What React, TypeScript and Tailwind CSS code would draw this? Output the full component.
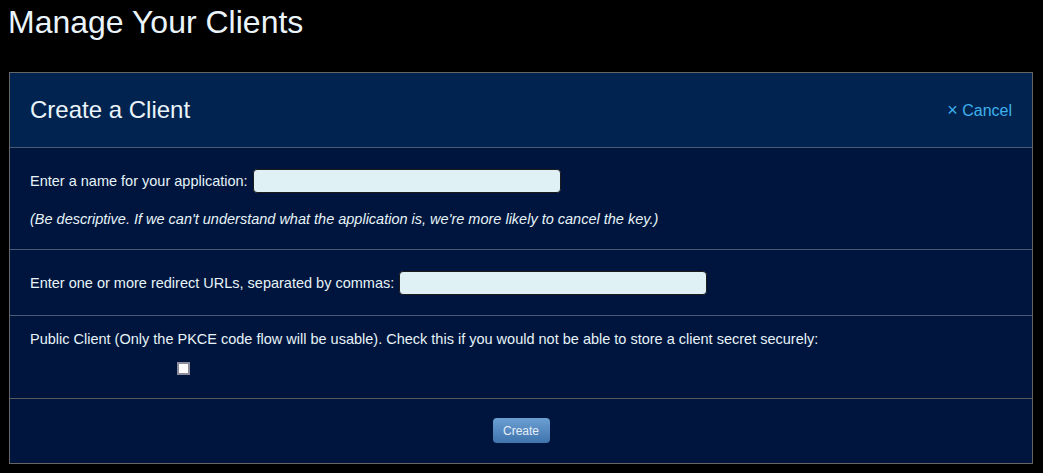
const font = { fontFamily: '"Liberation Sans", Arial, sans-serif' };

const Field = ({ label }: { label: string }) => (
  <div className="flex items-center h-[24px]">
    <span className="text-[14.5px] leading-[16px] text-[#e6f3f8]">{label}</span>
    <input
      type="text"
      className="ml-[5px] w-[308px] h-[24px] rounded-[4px] border border-[#1c1c1c] bg-[#e0f1f5] px-1 text-[14px] outline-none"
    />
  </div>
);

export default function App() {
  return (
    <div className="min-h-[473px] w-full bg-black pb-2" style={font}>
      <h1 className="pl-[8px] pt-[4px] text-[32px] leading-[37px] text-[#eaf4fa]">Manage Your Clients</h1>

      <div className="ml-[9px] mt-[31px] w-[1024px] border border-[#666666] bg-[#00153d]">
        <div className="flex h-[74px] items-center justify-between bg-[#00244f] px-5">
          <h2 className="text-[24px] leading-[28px] text-[#eaf4fa]">Create a Client</h2>
          <a href="#" className="text-[16px] leading-[18px] text-[#3fb0ee]">
            <span className="text-[18px]">×</span> Cancel
          </a>
        </div>

        <div className="border-t border-[#4a5a72] px-5 pt-[21px] pb-[22px]">
          <Field label="Enter a name for your application:" />
          <p className="mt-[18px] text-[14.5px] leading-[16px] italic text-[#e6f3f8]">
            (Be descriptive. If we can't understand what the application is, we're more likely to cancel the key.)
          </p>
        </div>

        <div className="border-t border-[#4a5a72] px-5 pt-[21px] pb-[20px]">
          <Field label="Enter one or more redirect URLs, separated by commas:" />
        </div>

        <div className="border-t border-[#4a5a72] px-5 pt-[15px] pb-[23px]">
          <p className="text-[14.5px] leading-[16px] text-[#e6f3f8]">
            Public Client (Only the PKCE code flow will be usable). Check this if you would not be able to store a client secret securely:
          </p>
          <input
            type="checkbox"
            className="mt-[15px] ml-[147px] block h-[13px] w-[13px] appearance-none border-2 border-[#8c8c9c] bg-white"
          />
        </div>

        <div className="flex justify-center border-t border-[#5a5a5a] pt-[19px] pb-[20px]">
          <button className="h-[25px] w-[57px] rounded-[4px] bg-gradient-to-b from-[#6c9fd2] to-[#3f74ad] text-[12px] text-[#e4eef8]">
            Create
          </button>
        </div>
      </div>
    </div>
  );
}
